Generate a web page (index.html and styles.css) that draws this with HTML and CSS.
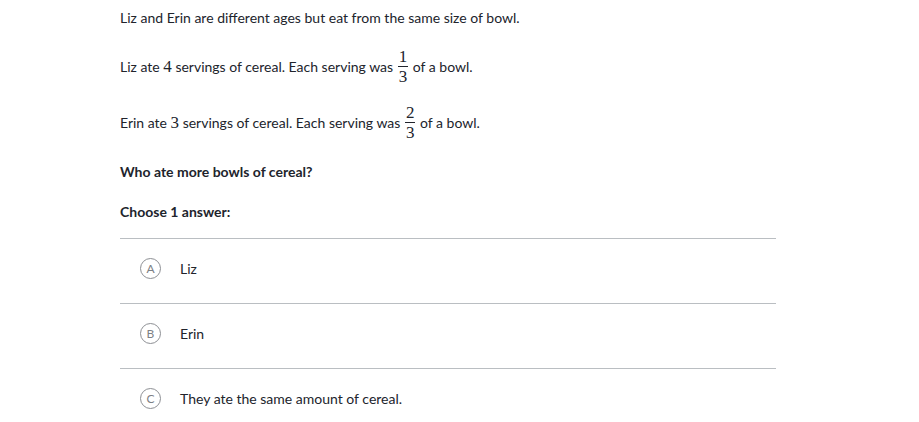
FILE: index.html
```html
<!DOCTYPE html>
<html lang="en">
<head>
    <meta charset="UTF-8">
    <meta name="viewport" content="width=device-width, initial-scale=1.0">
    <title>Cereal Question</title>
    <link rel="stylesheet" href="styles.css">
</head>
<body>
    <div class="container">
        <div class="question">
            <p class="intro">Liz and Erin are different ages but eat from the same size of bowl.</p>
            <p class="math-line">Liz ate <span class="num">4</span> servings of cereal. Each serving was <span class="frac"><span class="top">1</span><span class="bot">3</span></span> of a bowl.</p>
            <p class="math-line">Erin ate <span class="num">3</span> servings of cereal. Each serving was <span class="frac"><span class="top">2</span><span class="bot">3</span></span> of a bowl.</p>
            <p class="ask">Who ate more bowls of cereal?</p>
        </div>

        <p class="choose">Choose 1 answer:</p>

        <ul class="choices">
            <li class="choice"><span class="letter">A</span><span class="label">Liz</span></li>
            <li class="choice"><span class="letter">B</span><span class="label">Erin</span></li>
            <li class="choice"><span class="letter">C</span><span class="label">They ate the same amount of cereal.</span></li>
        </ul>
    </div>
</body>
</html>
```

FILE: styles.css
```css
body {
    margin: 0;
    font-family: Lato, "Noto Sans", sans-serif;
    font-size: 14px;
    color: #21242c;
    background: white;
}
.container {
    width: 656px;
    padding: 8px 0 0 120px;
}
p {
    margin: 0;
    line-height: 20px;
}
.math-line {
    margin-top: 21px;
}
.math-line + .math-line {
    margin-top: 18px;
}
.num,
.frac {
    font-family: "Liberation Serif", "DejaVu Serif", "Times New Roman", serif;
    font-size: 17px;
}
.frac {
    display: inline-flex;
    flex-direction: column;
    align-items: center;
    vertical-align: middle;
    line-height: 18px;
    margin: 0 1px;
    position: relative;
    top: -1px;
}
.frac .top {
    padding: 0 1px;
    border-bottom: 1px solid #21242c;
    margin-bottom: 1px;
}
.ask {
    font-weight: bold;
    margin-top: 19px;
}
.choose {
    font-weight: bold;
    margin-top: 20px;
}
.choices {
    list-style: none;
    margin: 16px 0 0;
    padding: 0;
}
.choice {
    display: flex;
    align-items: flex-start;
    height: 45px;
    padding: 19px 0 0 20px;
    border-top: 1px solid #babec2;
}
.letter {
    flex-shrink: 0;
    display: flex;
    align-items: center;
    justify-content: center;
    width: 19px;
    height: 19px;
    border: 1.5px solid #8d8f94;
    border-radius: 50%;
    font-size: 12px;
    color: #7d8085;
    margin-right: 19px;
}
.label {
    line-height: 22px;
}
```
